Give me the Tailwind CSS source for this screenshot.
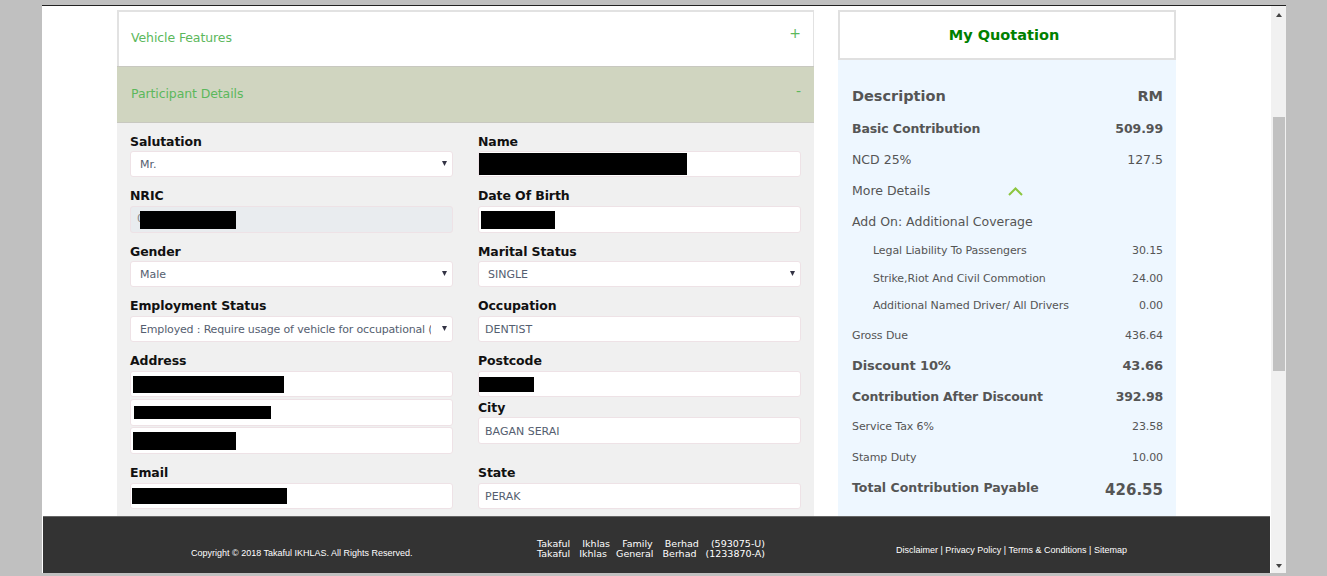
<!DOCTYPE html>
<html lang="en">
<head>
<meta charset="UTF-8">
<title>My Quotation</title>
<script src="https://cdn.jsdelivr.net/npm/@tailwindcss/browser@4"></script>
</head>
<body class="h-screen overflow-hidden bg-[#c0c0c0] font-['DejaVu_Sans',sans-serif]">
<div class="ml-[42px] mr-[41px] mt-[5px] h-[568px] flex flex-col border-t border-[#222] bg-white">
  <div class="flex flex-1 min-h-0">
    <!-- page -->
    <div class="w-[1229px] flex flex-col">
      <div class="flex-1 min-h-0 flex pl-[75px] pt-[4px] gap-[24px]">

        <!-- left column -->
        <div class="w-[697px] flex flex-col">
          <div class="h-[56px] flex items-center justify-between pl-[12px] pr-[12px] pb-[2px] bg-white border-l-2 border-t-2 border-r border-[#e2e2e2] text-[#5cb85c] text-[12.5px] tracking-[-0.1px]">
            <span>Vehicle Features</span><span class="text-[14px] -mt-[9px]">+</span>
          </div>
          <div class="h-[57px] flex items-center justify-between pl-[14px] pr-[13px] bg-[#d0d5c0] border-y border-[#c8c8c0] text-[#5cb85c] text-[12.5px] tracking-[-0.1px]">
            <span>Participant Details</span><span class="text-[14px] -mt-[7px]">-</span>
          </div>

          <div class="flex-1 bg-[#f0f0f0] grid grid-cols-[323px_323px] gap-x-[25px] pl-[13px] pt-[9px] text-[11px] text-[#555e70]">
            <!-- left fields -->
            <div>
              <div class="h-[19px] text-[12.5px] tracking-[-0.1px] font-bold text-[#111] leading-[20px]">Salutation</div>
              <div class="h-[26px] mb-[9px] flex items-center justify-between pl-[9px] pr-[5px] pt-[3px] bg-white border border-[#eee2e6] rounded-[3px]">Mr.<svg class="mb-[5px]" width="5" height="5" viewBox="0 0 5 5"><path d="M0 0h5L2.500 5z" fill="#334"/></svg></div>

              <div class="h-[20px] text-[12.5px] tracking-[-0.1px] font-bold text-[#111] leading-[20px]">NRIC</div>
              <div class="h-[27px] mb-[9px] flex items-center pl-[6px] bg-[#e9ecef] border border-[#eee2e6] rounded-[3px]"><span class="w-[3px] overflow-hidden text-[#888]">0</span><span class="w-[96px] h-[18px] bg-black"></span></div>

              <div class="h-[19px] text-[12.5px] tracking-[-0.1px] font-bold text-[#111] leading-[20px]">Gender</div>
              <div class="h-[26px] mb-[9px] flex items-center justify-between pl-[9px] pr-[5px] pt-[2px] bg-white border border-[#eee2e6] rounded-[3px]">Male<svg class="mb-[4px]" width="5" height="5" viewBox="0 0 5 5"><path d="M0 0h5L2.500 5z" fill="#334"/></svg></div>

              <div class="h-[20px] text-[12.5px] tracking-[-0.1px] font-bold text-[#111] leading-[20px]">Employment Status</div>
              <div class="h-[26px] mb-[9px] flex items-center justify-between pl-[9px] pr-[5px] pt-[2px] bg-white border border-[#eee2e6] rounded-[3px]"><span class="w-[291px] overflow-hidden whitespace-nowrap tracking-[-0.16px]">Employed : Require usage of vehicle for occupational (</span><svg class="mb-[4px]" width="5" height="5" viewBox="0 0 5 5"><path d="M0 0h5L2.500 5z" fill="#334"/></svg></div>

              <div class="h-[20px] text-[12.5px] tracking-[-0.1px] font-bold text-[#111] leading-[20px]">Address</div>
              <div class="h-[26px] mb-[2px] flex items-center pl-[2px] bg-white border border-[#eee2e6] rounded-[3px]"><span class="w-[151px] h-[17px] bg-black"></span></div>
              <div class="h-[27px] mb-[1px] flex items-center pl-[3px] bg-white border border-[#eee2e6] rounded-[3px]"><span class="w-[137px] h-[13px] bg-black"></span></div>
              <div class="h-[27px] mb-[9px] flex items-center pl-[2px] bg-white border border-[#eee2e6] rounded-[3px]"><span class="w-[103px] h-[18px] bg-black"></span></div>

              <div class="h-[20px] text-[12.5px] tracking-[-0.1px] font-bold text-[#111] leading-[20px]">Email</div>
              <div class="h-[26px] flex items-center pl-[1px] bg-white border border-[#eee2e6] rounded-[3px]"><span class="w-[155px] h-[16px] bg-black"></span></div>
            </div>

            <!-- right fields -->
            <div>
              <div class="h-[19px] text-[12.5px] tracking-[-0.1px] font-bold text-[#111] leading-[20px]">Name</div>
              <div class="h-[26px] mb-[9px] flex items-center bg-white border border-[#eee2e6] rounded-[3px]"><span class="w-[208px] h-[22px] bg-black"></span></div>

              <div class="h-[20px] text-[12.5px] tracking-[-0.1px] font-bold text-[#111] leading-[20px]">Date Of Birth</div>
              <div class="h-[27px] mb-[9px] flex items-center pl-[2px] bg-white border border-[#eee2e6] rounded-[3px]"><span class="w-[74px] h-[18px] bg-black"></span></div>

              <div class="h-[19px] text-[12.5px] tracking-[-0.1px] font-bold text-[#111] leading-[20px]">Marital Status</div>
              <div class="h-[26px] mb-[9px] flex items-center justify-between pl-[9px] pr-[5px] pt-[2px] bg-white border border-[#eee2e6] rounded-[3px]">SINGLE<svg class="mb-[4px]" width="5" height="5" viewBox="0 0 5 5"><path d="M0 0h5L2.500 5z" fill="#334"/></svg></div>

              <div class="h-[20px] text-[12.5px] tracking-[-0.1px] font-bold text-[#111] leading-[20px]">Occupation</div>
              <div class="h-[26px] mb-[9px] flex items-center pl-[6px] pt-[2px] bg-white border border-[#eee2e6] rounded-[3px]">DENTIST</div>

              <div class="h-[20px] text-[12.5px] tracking-[-0.1px] font-bold text-[#111] leading-[20px]">Postcode</div>
              <div class="h-[26px] mb-[1px] flex items-center bg-white border border-[#eee2e6] rounded-[3px]"><span class="w-[55px] h-[15px] bg-black"></span></div>

              <div class="h-[19px] text-[12.5px] tracking-[-0.1px] font-bold text-[#111] leading-[20px]">City</div>
              <div class="h-[27px] mb-[19px] flex items-center pl-[6px] pt-[3px] bg-white border border-[#eee2e6] rounded-[3px]">BAGAN SERAI</div>

              <div class="h-[20px] text-[12.5px] tracking-[-0.1px] font-bold text-[#111] leading-[20px]">State</div>
              <div class="h-[26px] flex items-center pl-[6px] pt-[2px] bg-white border border-[#eee2e6] rounded-[3px]">PERAK</div>
            </div>
          </div>
        </div>

        <!-- quotation -->
        <div class="w-[338px] flex flex-col">
          <div class="h-[50px] flex items-center justify-center pr-[6px] pt-[1px] border-2 border-[#e0e0e0] text-[14.5px] font-bold text-[#008000]">My Quotation</div>
          <div class="flex-1 bg-[#eef7ff] pl-[14px] pr-[13px] pt-[24px] text-[#555]">
            <div class="h-[25px] flex items-center justify-between text-[14.5px] font-bold"><span>Description</span><span>RM</span></div>
            <div class="h-[31px] mt-[5px] flex items-center justify-between text-[12.5px] tracking-[-0.1px] font-bold"><span>Basic Contribution</span><span>509.99</span></div>
            <div class="h-[31px] flex items-center justify-between text-[12.5px]"><span>NCD 25%</span><span>127.5</span></div>
            <div class="h-[31px] flex items-center text-[12.5px]"><span class="w-[156px]">More Details</span>
              <svg width="15" height="9" viewBox="0 0 15 9"><path d="M1 8l6.500-6.500L14 8" fill="none" stroke="#8cc63f" stroke-width="2"/></svg></div>
            <div class="h-[31px] flex items-center text-[12.5px]">Add On: Additional Coverage</div>
            <div class="h-[27px] pl-[21px] flex items-center justify-between text-[11px] tracking-[-0.1px]"><span>Legal Liability To Passengers</span><span>30.15</span></div>
            <div class="h-[28px] pl-[21px] flex items-center justify-between text-[11px] tracking-[-0.1px]"><span>Strike,Riot And Civil Commotion</span><span>24.00</span></div>
            <div class="h-[27px] pl-[21px] flex items-center justify-between text-[11px] tracking-[-0.1px]"><span>Additional Named Driver/ All Drivers</span><span>0.00</span></div>
            <div class="h-[31px] pt-[2px] flex items-center justify-between text-[11px] tracking-[-0.1px]"><span>Gross Due</span><span>436.64</span></div>
            <div class="h-[30px] flex items-center justify-between text-[13px] tracking-[-0.1px] font-bold"><span>Discount 10%</span><span>43.66</span></div>
            <div class="h-[31px] pt-[2px] flex items-center justify-between text-[12.5px] tracking-[-0.15px] font-bold"><span>Contribution After Discount</span><span>392.98</span></div>
            <div class="h-[31px] flex items-center justify-between text-[11px] tracking-[-0.1px]"><span>Service Tax 6%</span><span>23.58</span></div>
            <div class="h-[30px] flex items-center justify-between text-[11px] tracking-[-0.1px]"><span>Stamp Duty</span><span>10.00</span></div>
            <div class="h-[30px] flex items-center justify-between text-[12.5px] font-bold"><span>Total Contribution Payable</span><span class="text-[15px] mt-[4px]">426.55</span></div>
          </div>
        </div>
      </div>

      <!-- footer -->
      <div class="h-[57px] shrink-0 ml-[1px] mr-[1px] bg-[#333] border-t border-[#666] flex text-white">
        <div class="w-[494px] pl-[148px] pt-[31px] text-[9px] leading-[11px] font-['Liberation_Sans',sans-serif] whitespace-nowrap">Copyright © 2018 Takaful IKHLAS. All Rights Reserved.</div>
        <div class="w-[228px] pt-[22px] text-[9.5px] leading-[10px]">
          <div class="flex justify-between"><span>Takaful</span><span>Ikhlas</span><span>Family</span><span>Berhad</span><span>(593075-U)</span></div>
          <div class="flex justify-between"><span>Takaful</span><span>Ikhlas</span><span>General</span><span>Berhad</span><span>(1233870-A)</span></div>
        </div>
        <div class="ml-[131px] pt-[28px] text-[9px] leading-[11px] font-['Liberation_Sans',sans-serif] whitespace-nowrap">Disclaimer | Privacy Policy | Terms &amp; Conditions | Sitemap</div>
      </div>
    </div>

    <!-- scrollbar -->
    <div class="w-[15px] bg-[#f1f1f1] flex flex-col items-center">
      <svg class="mt-[7px] shrink-0" width="6" height="4" viewBox="0 0 6 4"><path d="M3 0l3 4H0z" fill="#444"/></svg>
      <div class="mt-[100px] ml-[1px] w-[12px] h-[254px] shrink-0 bg-[#c1c1c1]"></div>
      <svg class="mt-auto mb-[5px] shrink-0" width="6" height="4" viewBox="0 0 6 4"><path d="M3 4l3-4H0z" fill="#444"/></svg>
    </div>
  </div>
</div>
</body>
</html>
